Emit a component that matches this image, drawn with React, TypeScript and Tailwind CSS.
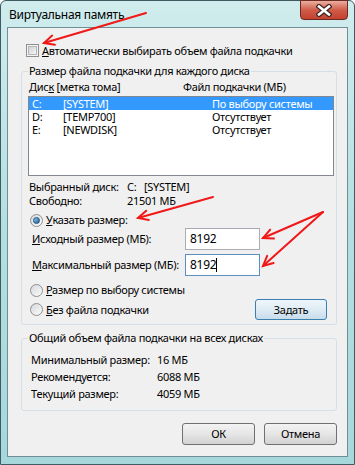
import React from "react";

type Pt = [number, number];

const Arrow = ({ from, to }: { from: Pt; to: Pt }) => {
  const [x1, y1] = from;
  const [x2, y2] = to;
  const a = Math.atan2(y1 - y2, x1 - x2);
  const len = 11;
  const spread = 0.45;
  const w1: Pt = [x2 + len * Math.cos(a + spread), y2 + len * Math.sin(a + spread)];
  const w2: Pt = [x2 + len * Math.cos(a - spread), y2 + len * Math.sin(a - spread)];
  return (
    <g stroke="#f01818" strokeWidth={2} strokeLinecap="round" fill="none">
      <line x1={x1} y1={y1} x2={x2} y2={y2} />
      <polyline points={`${w1[0]},${w1[1]} ${x2},${y2} ${w2[0]},${w2[1]}`} />
    </g>
  );
};

const CheckBox = () => (
  <div className="w-[13px] h-[13px] border border-[#8e8f8f] bg-[#f4f4f4] p-[1px] shrink-0">
    <div className="w-full h-full border border-[#b4b6ba] bg-linear-to-br from-[#cfd1d5] to-[#f6f6f6]" />
  </div>
);

const Radio = ({ checked }: { checked?: boolean }) => (
  <div className="w-[13px] h-[13px] rounded-full border border-[#8e8f8f] bg-linear-to-br from-[#d6d8dc] to-[#fbfbfb] flex items-center justify-center shrink-0">
    {checked && (
      <div className="w-[7px] h-[7px] rounded-full border border-[#1c4e7a] bg-linear-to-br from-[#8ccdf0] to-[#1b5e97]" />
    )}
  </div>
);

const Btn = ({ label, primary }: { label: string; primary?: boolean }) => (
  <div
    className={
      "flex items-center justify-center rounded-[3px] border text-black " +
      (primary
        ? "border-[#3c7fb1] bg-linear-to-b from-[#eef6fb] via-[#dfecf5] to-[#c7dceb] w-[72px] h-[21px]"
        : "border-[#707070] bg-linear-to-b from-[#f3f3f3] via-[#e6e6e6] to-[#d2d2d2] w-[73px] h-[22px]")
    }
  >
    {label}
  </div>
);

const disks = [
  { d: "C:", label: "[SYSTEM]", size: "По выбору системы", sel: true },
  { d: "D:", label: "[TEMP700]", size: "Отсутствует" },
  { d: "E:", label: "[NEWDISK]", size: "Отсутствует" },
];

const totals = [
  ["Минимальный размер:", "16 МБ"],
  ["Рекомендуется:", "6088 МБ"],
  ["Текущий размер:", "4059 МБ"],
];

export default function App() {
  return (
    <div className="relative w-[355px] h-[465px] overflow-hidden font-['Noto_Sans',sans-serif] text-[11px] leading-[14px] tracking-[-0.3px] whitespace-nowrap text-black">
      <div className="w-[355px] h-[465px] flex flex-col border-l border-r border-b border-t border-[#3f5a60] rounded-t-[6px] bg-linear-to-b from-[#d0eced] via-[#b3dfe2] to-[#a6d8db]">
        {/* title bar */}
        <div className="h-[26px] flex items-start">
          <div className="pl-[8px] pt-[7px] text-[12px] leading-[14px]">Виртуальная память</div>
          <div className="ml-auto mr-[6px] -mt-[1px] w-[48px] h-[20px] rounded-b-[4px] border border-[#6b2a22] bg-linear-to-b from-[#eaaea1] via-[#cf5b48] to-[#c4412f] flex items-center justify-center">
            <svg width="16" height="13" viewBox="0 0 16 13">
              <path d="M3 2.5 L13 10.5 M13 2.5 L3 10.5" stroke="#3d2420" strokeWidth="5" strokeLinecap="square" />
              <path d="M3 2.5 L13 10.5 M13 2.5 L3 10.5" stroke="#ffffff" strokeWidth="2.6" strokeLinecap="square" />
            </svg>
          </div>
        </div>

        {/* client area */}
        <div className="mx-[6px] h-[430px] border border-[#6f8e95] bg-[#f0f0f0] flex flex-col">
          <div className="mt-[16px] ml-[18px] h-[13px] flex items-center gap-[3px]">
            <CheckBox />
            <span>
              <span className="underline">А</span>втоматически выбирать объем файла подкачки
            </span>
          </div>

          <fieldset className="mt-[7px] ml-[13px] w-[316px] border border-[#d5dfe5] rounded-[3px] pb-[4px]">
            <legend className="ml-[6px] px-[1px]">Размер файла подкачки для каждого диска</legend>
            <div className="mt-[2px] pl-[7px] flex">
              <span className="w-[154px]">
                Дис<span className="underline">к</span> [метка тома]
              </span>
              <span>Файл подкачки (МБ)</span>
            </div>
            <div className="mt-[2px] ml-[6px] w-[306px] h-[80px] border border-[#828790] bg-white">
              {disks.map((r) => (
                <div
                  key={r.d}
                  className={"h-[13px] leading-[13px] flex pl-[3px] " + (r.sel ? "bg-[#3399ff] text-white" : "")}
                >
                  <span className="w-[31px]">{r.d}</span>
                  <span className="w-[149px]">{r.label}</span>
                  <span>{r.size}</span>
                </div>
              ))}
            </div>
            <div className="mt-[4px] pl-[7px]">
              <div className="flex">
                <span className="w-[98px]">Выбранный диск:</span>
                <span className="w-[17px]">C:</span>
                <span>[SYSTEM]</span>
              </div>
              <div className="flex">
                <span className="w-[98px]">Свободно:</span>
                <span>21501 МБ</span>
              </div>
            </div>
            <div className="mt-[5px] ml-[8px] flex items-center gap-[3px] h-[14px]">
              <Radio checked />
              <span>
                <span className="underline">У</span>казать размер:
              </span>
            </div>
            <div className="mt-[1px] ml-[10px] flex items-center h-[22px]">
              <span className="w-[153px]">
                <span className="underline">И</span>сходный размер (МБ):
              </span>
              <div className="w-[75px] h-[22px] border border-[#abadb3] border-t-[#a6abb3] bg-white pl-[4px] flex items-center text-[12px]">
                8192
              </div>
            </div>
            <div className="mt-[4px] ml-[10px] flex items-center h-[22px]">
              <span className="w-[153px]">
                <span className="underline">М</span>аксимальный размер (МБ):
              </span>
              <div className="w-[75px] h-[22px] border border-[#5b8fbf] bg-white pl-[4px] flex items-center text-[12px]">
                8192<span className="w-[1px] h-[14px] bg-black" />
              </div>
            </div>
            <div className="mt-[7px] ml-[8px] flex items-center gap-[3px] h-[14px]">
              <Radio />
              <span>
                <span className="underline">Р</span>азмер по выбору системы
              </span>
            </div>
            <div className="mt-[2px] ml-[8px] flex items-center h-[21px]">
              <div className="flex items-center gap-[3px]">
                <Radio />
                <span>
                  <span className="underline">Б</span>ез файла подкачки
                </span>
              </div>
              <div className="ml-auto mr-[9px]">
                <Btn label="Задать" primary />
              </div>
            </div>
          </fieldset>

          <fieldset className="mt-[6px] ml-[13px] w-[316px] border border-[#d5dfe5] rounded-[3px] pb-[8px]">
            <legend className="ml-[6px] px-[1px]">Общий объем файла подкачки на всех дисках</legend>
            <div className="mt-[6px] pl-[9px]">
              {totals.map(([k, v]) => (
                <div key={k} className="h-[17px] flex items-center">
                  <span className="w-[126px]">{k}</span>
                  <span>{v}</span>
                </div>
              ))}
            </div>
          </fieldset>

          <div className="mt-[12px] ml-auto mr-[10px] flex gap-[9px]">
            <Btn label="ОК" />
            <Btn label="Отмена" />
          </div>
        </div>
      </div>

      <svg className="absolute inset-0 pointer-events-none" width="355" height="465">
        <Arrow from={[146, 13]} to={[44, 43]} />
        <Arrow from={[213, 197]} to={[138, 218]} />
        <Arrow from={[323, 212]} to={[263, 238]} />
        <Arrow from={[323, 212]} to={[263, 266]} />
      </svg>
    </div>
  );
}
